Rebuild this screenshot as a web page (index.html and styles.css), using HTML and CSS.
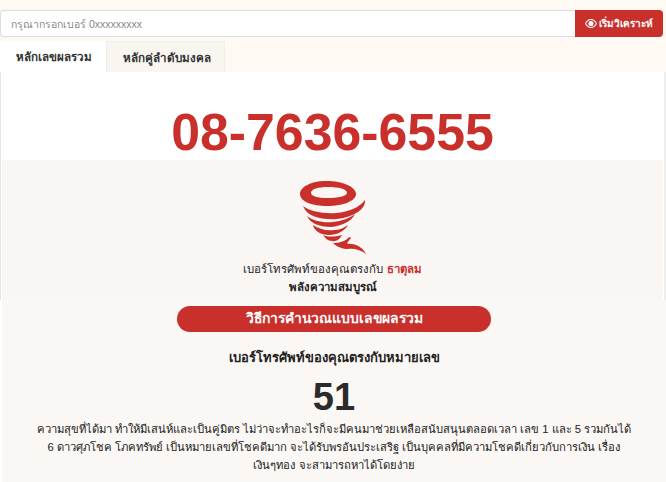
FILE: index.html
```html
<!DOCTYPE html>
<html lang="th">
<head>
  <meta charset="UTF-8">
  <meta name="viewport" content="width=device-width, initial-scale=1.0">
  <title>วิเคราะห์เบอร์</title>
  <link rel="stylesheet" href="styles.css">
</head>
<body>
  <form class="search">
    <input type="text" placeholder="กรุณากรอกเบอร์ 0xxxxxxxxx">
    <button type="button">
      <svg class="eye" viewBox="0 0 16 12" width="12" height="9"><path fill="#fff" fill-rule="evenodd" d="M8 0C4.500 0 1.700 2.200 0 6c1.700 3.800 4.500 6 8 6s6.300-2.200 8-6c-1.700-3.800-4.500-6-8-6zm0 1.300c2.700 0 5 1.800 6.500 4.700C13 8.900 10.700 10.700 8 10.700S3 8.900 1.500 6C3 3.100 5.300 1.300 8 1.300zM8 2.600A3.400 3.400 0 1 0 8 9.400 3.400 3.400 0 0 0 8 2.600z"/></svg>
      เริ่มวิเคราะห์
    </button>
  </form>

  <div class="tabs">
    <div class="tab active">หลักเลขผลรวม</div>
    <div class="tab">หลักคู่ลำดับมงคล</div>
  </div>

  <div class="panel">
    <h1 class="phone">08-7636-6555</h1>
    <div class="element">
      <svg class="tornado" viewBox="0 0 80 85" width="80" height="85">
        <g fill="#c9302c">
          <path fill-rule="evenodd" d="M35 6C20 6 9 12 9 19c0 8 13 12 27 12 16 0 29-5 29-12 0-7-13-13-30-13zm2 6c11 0 19 2 19 6 0 3-9 5-20 5-9 0-16-2-16-5 0-4 7-6 17-6z"/>
          <path d="M12 31c6 5 20 8 33 7 13-1 24-6 29-13 1 9-11 17-28 19-15 1-30-2-34-13z"/>
          <path d="M16 41c6 5 16 7 26 6 9-1 17-4 22-8-3 7-13 12-24 13-12 0-21-4-24-11z"/>
          <path d="M22 50c6 4 13 6 21 5 5 0 10-2 14-5-3 6-11 10-19 10-8 0-15-4-16-10z"/>
          <path d="M32 60c5 2 11 2 19 0-2 4-6 7-10 6-4 0-7-3-9-6z"/>
          <path d="M42 68c6 0 13-2 16-6l2 1c-2 3-5 5-3 6 6-1 15 3 18 10-5-4-12-6-18-5-5 0-11-2-15-6z"/>
        </g>
      </svg>
      <p class="match">เบอร์โทรศัพท์ของคุณตรงกับ <strong>ธาตุลม</strong></p>
      <p class="power">พลังความสมบูรณ์</p>
    </div>
  </div>

  <div class="summary">
    <div class="pill">วิธีการคำนวณแบบเลขผลรวม</div>
    <h2>เบอร์โทรศัพท์ของคุณตรงกับหมายเลข</h2>
    <div class="number">51</div>
    <p>ความสุขที่ได้มา ทำให้มีเสน่ห์และเป็นคู่มิตร ไม่ว่าจะทำอะไรก็จะมีคนมาช่วยเหลือสนับสนุนตลอดเวลา เลข 1 และ 5 รวมกันได้ 6 ดาวศุภโชค โภคทรัพย์ เป็นหมายเลขที่โชคดีมาก จะได้รับพรอันประเสริฐ เป็นบุคคลที่มีความโชคดีเกี่ยวกับการเงิน เรื่อง <span class="nowrap">เงินๆทอง</span> จะสามารถหาได้โดยง่าย</p>
  </div>
</body>
</html>
```

FILE: styles.css
```css
* {
  box-sizing: border-box;
}

body {
  margin: 0;
  font-family: "Liberation Sans", "Noto Sans", sans-serif;
  background-color: #fef9f3;
  color: #333;
  font-size: 12px;
  overflow: hidden;
}

.search {
  display: flex;
  padding: 10px 3px 0 0;
  height: 37px;
}

.search input {
  flex: 1;
  height: 27px;
  padding: 0 10px;
  border: 1px solid #ddd;
  border-right: none;
  border-radius: 4px 0 0 4px;
  background-color: #fff;
  font: inherit;
  font-size: 10.500px;
  outline: none;
}

.search input::placeholder {
  color: #888;
}

.search button {
  width: 88px;
  height: 27px;
  padding: 0;
  border: none;
  border-radius: 0 4px 4px 0;
  background-color: #c9302c;
  color: #fff;
  font: inherit;
  font-weight: 700;
  font-size: 10px;
}

.eye {
  vertical-align: -1px;
}

.tabs {
  display: flex;
  margin-top: 4px;
  height: 31px;
}

.tab {
  width: 119px;
  padding: 0 0 0 16px;
  line-height: 32px;
  font-weight: 700;
  font-size: 11.600px;
  color: #333;
  white-space: nowrap;
  background-color: #f9f5f1;
  border: 1px solid #eee;
  border-bottom: none;
}

.tab.active {
  width: 106px;
  background-color: #fff;
  border: none;
}

.panel {
  height: 228px;
  padding-top: 30px;
  background-color: #fff;
  border-right: 2px solid #eee;
  border-left: 1px solid #e6e6e6;
}

.phone {
  margin: 0;
  height: 58px;
  text-align: center;
  font-size: 51.800px;
  line-height: 60px;
  font-weight: 700;
  color: #c9302c;
}

.element {
  height: 140px;
  margin: 0 1px;
  background-color: #faf6f3;
  text-align: center;
  padding-top: 15px;
}

.tornado {
  display: block;
  margin: 0 auto;
  transform: translateX(-2px);
}

.element p {
  margin: 0;
  line-height: 18px;
  font-size: 11.400px;
  color: #222;
}

.match strong {
  color: #c9302c;
}

.power {
  font-weight: 700;
}

.summary {
  background-color: #fbf7f4;
  border-left: 2px solid #fff;
  text-align: center;
  padding: 6px 32px 0;
  height: 182px;
}

.pill {
  width: 314px;
  height: 26px;
  margin: 0 auto;
  border-radius: 13px;
  background-color: #c9302c;
  color: #fff;
  font-size: 13.900px;
  font-weight: 700;
  line-height: 25px;
}

.summary h2 {
  margin: 16px 0 0;
  font-size: 13px;
  line-height: 20px;
  font-weight: 700;
  color: #222;
}

.number {
  font-size: 38px;
  line-height: 44px;
  font-weight: 700;
  margin-top: 7px;
  color: #2b2b2b;
}

.summary p {
  margin: 1px 0 0;
  font-size: 11.250px;
  line-height: 18px;
  color: #222;
}

.nowrap {
  white-space: nowrap;
}
```
